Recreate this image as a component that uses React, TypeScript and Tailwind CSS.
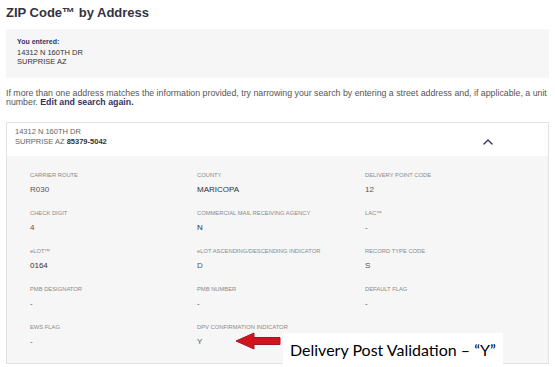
import { ChevronUp } from 'lucide-react'

type Field = { label: string; value: string; strong?: boolean }

const fields: Field[] = [
  { label: 'CARRIER ROUTE', value: 'R030' },
  { label: 'COUNTY', value: 'MARICOPA', strong: true },
  { label: 'DELIVERY POINT CODE', value: '12' },
  { label: 'CHECK DIGIT', value: '4' },
  { label: 'COMMERCIAL MAIL RECEIVING AGENCY', value: 'N', strong: true },
  { label: 'LAC™', value: '-' },
  { label: 'eLOT™', value: '0164', strong: true },
  { label: 'eLOT ASCENDING/DESCENDING INDICATOR', value: 'D' },
  { label: 'RECORD TYPE CODE', value: 'S' },
  { label: 'PMB DESIGNATOR', value: '-' },
  { label: 'PMB NUMBER', value: '-' },
  { label: 'DEFAULT FLAG', value: '-' },
  { label: 'EWS FLAG', value: '-' },
  { label: 'DPV CONFIRMATION INDICATOR', value: 'Y' },
]

export default function App() {
  return (
    <div className="relative h-[367px] w-[555px] overflow-hidden bg-white px-[6px] font-['Liberation_Sans',Arial,sans-serif] text-[#333]">
      <h1 className="pt-[5px] text-[13px] font-bold leading-[16px] text-[#333345]">ZIP Code™ by Address</h1>

      <div className="mt-[8px] h-[49px] bg-[#f6f6f6] px-[11px] pt-[8px]">
        <p className="text-[7px] font-bold leading-[9px] text-[#333366]">You entered:</p>
        <p className="mt-[2px] text-[7.5px] leading-[9px] text-[#333]">14312 N 160TH DR</p>
        <p className="text-[7.5px] leading-[9px] text-[#333]">SURPRISE AZ</p>
      </div>

      <p className="mt-[11px] text-[8.8px] leading-[9px] text-[#555]">
        If more than one address matches the information provided, try narrowing your search by entering a street address and, if applicable, a unit
        <br />
        number. <span className="font-bold text-[#333366]">Edit and search again.</span>
      </p>

      <div className="mt-[15px] border border-[#e2e2e2]">
        <div className="flex h-[33px] items-start justify-between bg-white pl-[8px] pr-[52px] pt-[4px]">
          <div className="text-[7.5px] leading-[10px] text-[#666]">
            <p>14312 N 160TH DR</p>
            <p>
              SURPRISE AZ <span className="font-bold text-[#333]">85379-5042</span>
            </p>
          </div>
          <ChevronUp className="mt-[7px] h-[16px] w-[16px] text-[#333366]" strokeWidth={2} />
        </div>
        <div className="grid grid-cols-[167px_168px_1fr] gap-y-[14px] bg-[#f6f6f6] pb-[16px] pl-[23px] pt-[15px]">
          {fields.map((f) => (
            <div key={f.label} className="h-[24px]">
              <p className="text-[5.8px] leading-[8px] text-[#8a8a8a]">{f.label}</p>
              <p className={`mt-[6px] text-[8px] leading-[10px] ${f.strong ? 'text-[#333]' : 'text-[#555]'}`}>{f.value}</p>
            </div>
          ))}
        </div>
      </div>

      <svg className="absolute left-[234px] top-[332px]" width="48" height="18" viewBox="0 0 48 18">
        <polygon points="2,9 20,1 20,5.5 46,5.5 46,12.5 20,12.5 20,17" fill="#d2141e" stroke="#9a1a2a" strokeWidth="1" />
      </svg>

      <div className="absolute left-[283px] top-[333px] h-[34px] w-[220px] bg-white pl-[7px] pt-[8px]">
        <p className="font-['Lato','Open_Sans',sans-serif] text-[16px] leading-[18px] text-black">Delivery Post Validation – “Y”</p>
      </div>
    </div>
  )
}
